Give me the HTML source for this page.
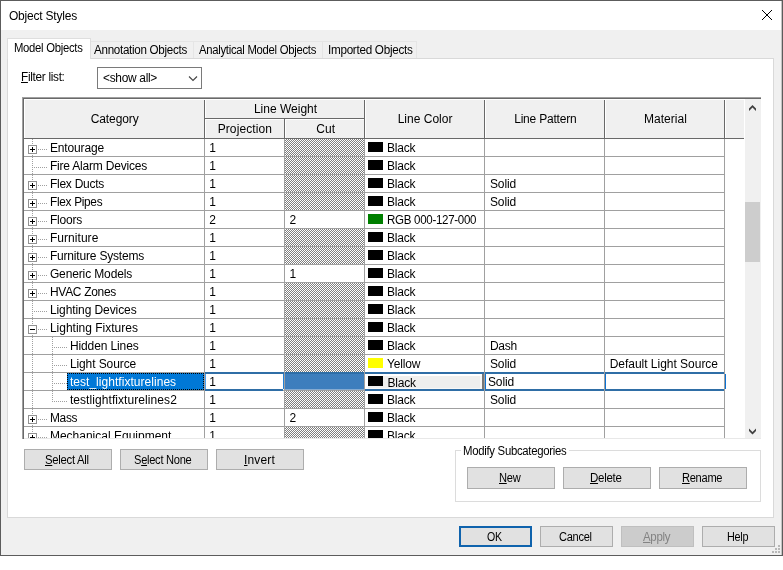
<!DOCTYPE html>
<html><head><meta charset="utf-8"><title>Object Styles</title>
<style>
html,body{margin:0;padding:0;background:#fff}
body{width:783px;height:570px;position:relative;overflow:hidden;font-family:"Liberation Sans",sans-serif;font-size:12px}
.t{position:absolute;white-space:pre;line-height:14px;height:14px;filter:grayscale(1)}
u{text-decoration:underline;text-underline-offset:1px}
</style></head><body>
<div style="position:absolute;left:0px;top:0px;width:783px;height:556px;background:#5c5c5c"></div>
<div style="position:absolute;left:1px;top:1px;width:781px;height:554px;background:#f0f0f0"></div>
<div style="position:absolute;left:1px;top:1px;width:781px;height:29px;background:#fff"></div>
<div class="t" style="left:8.90px;top:9px;font-size:12px;letter-spacing:-0.200px;color:#000;">Object Styles</div>
<svg style="position:absolute;left:761px;top:9px" width="12" height="12" viewBox="0 0 12 12"><path d="M1 1 L11 11 M11 1 L1 11" stroke="#000" stroke-width="1" fill="none"/></svg>
<div style="position:absolute;left:781px;top:1px;width:1px;height:554px;background:#c4c4c4"></div>
<div style="position:absolute;left:91px;top:41px;width:103px;height:18px;background:#f0f0f0;border:1px solid #e5e5e5;border-left:none;box-sizing:border-box"></div>
<div style="position:absolute;left:194px;top:41px;width:129px;height:18px;background:#f0f0f0;border:1px solid #e5e5e5;border-left:none;box-sizing:border-box"></div>
<div style="position:absolute;left:323px;top:41px;width:94px;height:18px;background:#f0f0f0;border:1px solid #e5e5e5;border-left:none;box-sizing:border-box"></div>
<div style="position:absolute;left:7px;top:58px;width:767px;height:460px;background:#fff;border:1px solid #d9d9d9;box-sizing:border-box"></div>
<div style="position:absolute;left:7px;top:38px;width:84px;height:21px;background:#fff;border:1px solid #dedede;border-bottom:none;box-sizing:border-box"></div>
<div class="t" style="left:13.90px;top:41px;font-size:12px;letter-spacing:-0.300px;color:#000;transform:scaleX(0.9409);transform-origin:0 50%;">Model Objects</div>
<div class="t" style="left:94.40px;top:43px;font-size:12px;letter-spacing:-0.300px;color:#000;transform:scaleX(0.9687);transform-origin:0 50%;">Annotation Objects</div>
<div class="t" style="left:199.40px;top:43px;font-size:12px;letter-spacing:-0.300px;color:#000;transform:scaleX(0.9421);transform-origin:0 50%;">Analytical Model Objects</div>
<div class="t" style="left:327.90px;top:43px;font-size:12px;letter-spacing:-0.300px;color:#000;transform:scaleX(0.9760);transform-origin:0 50%;">Imported Objects</div>
<div class="t" style="left:21.40px;top:70px;font-size:12px;letter-spacing:-0.300px;color:#000;transform:scaleX(0.9820);transform-origin:0 50%;"><u>F</u>ilter list:</div>
<div style="position:absolute;left:97px;top:67px;width:105px;height:22px;background:#fff;border:1px solid #7a7a7a;box-sizing:border-box"></div>
<div class="t" style="left:102.65px;top:71px;font-size:12px;letter-spacing:-0.300px;color:#000;transform:scaleX(0.9931);transform-origin:0 50%;">&lt;show all&gt;</div>
<svg style="position:absolute;left:187px;top:74px" width="12" height="8" viewBox="0 0 12 8"><path d="M2 2.5 L6 6.5 L10 2.5" stroke="#444" stroke-width="1.1" fill="none"/></svg>
<div style="position:absolute;left:22px;top:97px;width:739px;height:342px;background:#fff"></div>
<div style="position:absolute;left:24px;top:99px;width:720px;height:39px;background:#f0f0f0"></div>
<div style="position:absolute;left:24px;top:139px;width:737px;height:299px;overflow:hidden"><div style="position:absolute;left:-24px;top:-139px">
<div style="position:absolute;left:32px;top:139px;width:1px;height:300px;background:repeating-linear-gradient(180deg,#a0a0a0 0 1px,transparent 1px 2px)"></div>
<div style="position:absolute;left:52px;top:337px;width:1px;height:64px;background:repeating-linear-gradient(180deg,#a0a0a0 0 1px,transparent 1px 2px)"></div>
<div style="position:absolute;left:24px;top:156px;width:700px;height:1px;background:#a0a0a0"></div>
<div style="position:absolute;left:285px;top:139px;width:79px;height:17px;background:conic-gradient(#7f7f7f 25%,#fff 0 50%,#7f7f7f 0 75%,#fff 0) 0 0/2px 2px"></div>
<div style="position:absolute;left:28px;top:145px;width:9px;height:9px;box-sizing:border-box;border:1px solid #919191;background:#fff"></div>
<div style="position:absolute;left:30px;top:149px;width:5px;height:1px;background:#000"></div>
<div style="position:absolute;left:32px;top:147px;width:1px;height:5px;background:#000"></div>
<div style="position:absolute;left:38px;top:149px;width:10px;height:1px;background:repeating-linear-gradient(90deg,#a0a0a0 0 1px,transparent 1px 2px)"></div>
<div class="t" style="left:49.90px;top:141px;font-size:12px;letter-spacing:-0.127px;color:#000;">Entourage</div>
<div class="t" style="left:209.30px;top:141px;font-size:12px;letter-spacing:0.000px;color:#000;">1</div>
<div style="position:absolute;left:368px;top:142px;width:15px;height:10px;background:#000"></div>
<div class="t" style="left:386.90px;top:141px;font-size:12px;letter-spacing:-0.169px;color:#000;">Black</div>
<div style="position:absolute;left:24px;top:174px;width:700px;height:1px;background:#a0a0a0"></div>
<div style="position:absolute;left:285px;top:157px;width:79px;height:17px;background:conic-gradient(#7f7f7f 25%,#fff 0 50%,#7f7f7f 0 75%,#fff 0) 0 0/2px 2px"></div>
<div style="position:absolute;left:32px;top:167px;width:16px;height:1px;background:repeating-linear-gradient(90deg,#a0a0a0 0 1px,transparent 1px 2px)"></div>
<div class="t" style="left:49.90px;top:159px;font-size:12px;letter-spacing:-0.191px;color:#000;">Fire Alarm Devices</div>
<div class="t" style="left:209.30px;top:159px;font-size:12px;letter-spacing:0.000px;color:#000;">1</div>
<div style="position:absolute;left:368px;top:160px;width:15px;height:10px;background:#000"></div>
<div class="t" style="left:386.90px;top:159px;font-size:12px;letter-spacing:-0.169px;color:#000;">Black</div>
<div style="position:absolute;left:24px;top:192px;width:700px;height:1px;background:#a0a0a0"></div>
<div style="position:absolute;left:285px;top:175px;width:79px;height:17px;background:conic-gradient(#7f7f7f 25%,#fff 0 50%,#7f7f7f 0 75%,#fff 0) 0 0/2px 2px"></div>
<div style="position:absolute;left:28px;top:181px;width:9px;height:9px;box-sizing:border-box;border:1px solid #919191;background:#fff"></div>
<div style="position:absolute;left:30px;top:185px;width:5px;height:1px;background:#000"></div>
<div style="position:absolute;left:32px;top:183px;width:1px;height:5px;background:#000"></div>
<div style="position:absolute;left:38px;top:185px;width:10px;height:1px;background:repeating-linear-gradient(90deg,#a0a0a0 0 1px,transparent 1px 2px)"></div>
<div class="t" style="left:49.90px;top:177px;font-size:12px;letter-spacing:-0.244px;color:#000;">Flex Ducts</div>
<div class="t" style="left:209.30px;top:177px;font-size:12px;letter-spacing:0.000px;color:#000;">1</div>
<div style="position:absolute;left:368px;top:178px;width:15px;height:10px;background:#000"></div>
<div class="t" style="left:386.90px;top:177px;font-size:12px;letter-spacing:-0.169px;color:#000;">Black</div>
<div class="t" style="left:489.90px;top:177px;font-size:12px;letter-spacing:-0.087px;color:#000;">Solid</div>
<div style="position:absolute;left:24px;top:210px;width:700px;height:1px;background:#a0a0a0"></div>
<div style="position:absolute;left:285px;top:193px;width:79px;height:17px;background:conic-gradient(#7f7f7f 25%,#fff 0 50%,#7f7f7f 0 75%,#fff 0) 0 0/2px 2px"></div>
<div style="position:absolute;left:28px;top:199px;width:9px;height:9px;box-sizing:border-box;border:1px solid #919191;background:#fff"></div>
<div style="position:absolute;left:30px;top:203px;width:5px;height:1px;background:#000"></div>
<div style="position:absolute;left:32px;top:201px;width:1px;height:5px;background:#000"></div>
<div style="position:absolute;left:38px;top:203px;width:10px;height:1px;background:repeating-linear-gradient(90deg,#a0a0a0 0 1px,transparent 1px 2px)"></div>
<div class="t" style="left:49.90px;top:195px;font-size:12px;letter-spacing:-0.300px;color:#000;transform:scaleX(0.9853);transform-origin:0 50%;">Flex Pipes</div>
<div class="t" style="left:209.30px;top:195px;font-size:12px;letter-spacing:0.000px;color:#000;">1</div>
<div style="position:absolute;left:368px;top:196px;width:15px;height:10px;background:#000"></div>
<div class="t" style="left:386.90px;top:195px;font-size:12px;letter-spacing:-0.169px;color:#000;">Black</div>
<div class="t" style="left:489.90px;top:195px;font-size:12px;letter-spacing:-0.087px;color:#000;">Solid</div>
<div style="position:absolute;left:24px;top:228px;width:700px;height:1px;background:#a0a0a0"></div>
<div style="position:absolute;left:28px;top:217px;width:9px;height:9px;box-sizing:border-box;border:1px solid #919191;background:#fff"></div>
<div style="position:absolute;left:30px;top:221px;width:5px;height:1px;background:#000"></div>
<div style="position:absolute;left:32px;top:219px;width:1px;height:5px;background:#000"></div>
<div style="position:absolute;left:38px;top:221px;width:10px;height:1px;background:repeating-linear-gradient(90deg,#a0a0a0 0 1px,transparent 1px 2px)"></div>
<div class="t" style="left:49.90px;top:213px;font-size:12px;letter-spacing:-0.182px;color:#000;">Floors</div>
<div class="t" style="left:209.30px;top:213px;font-size:12px;letter-spacing:0.000px;color:#000;">2</div>
<div class="t" style="left:289.50px;top:213px;font-size:12px;letter-spacing:0.000px;color:#000;">2</div>
<div style="position:absolute;left:368px;top:214px;width:15px;height:10px;background:#007f00"></div>
<div class="t" style="left:386.90px;top:213px;font-size:12px;letter-spacing:-0.300px;color:#000;transform:scaleX(0.9606);transform-origin:0 50%;">RGB 000-127-000</div>
<div style="position:absolute;left:24px;top:246px;width:700px;height:1px;background:#a0a0a0"></div>
<div style="position:absolute;left:285px;top:229px;width:79px;height:17px;background:conic-gradient(#7f7f7f 25%,#fff 0 50%,#7f7f7f 0 75%,#fff 0) 0 0/2px 2px"></div>
<div style="position:absolute;left:28px;top:235px;width:9px;height:9px;box-sizing:border-box;border:1px solid #919191;background:#fff"></div>
<div style="position:absolute;left:30px;top:239px;width:5px;height:1px;background:#000"></div>
<div style="position:absolute;left:32px;top:237px;width:1px;height:5px;background:#000"></div>
<div style="position:absolute;left:38px;top:239px;width:10px;height:1px;background:repeating-linear-gradient(90deg,#a0a0a0 0 1px,transparent 1px 2px)"></div>
<div class="t" style="left:49.90px;top:231px;font-size:12px;letter-spacing:0.052px;color:#000;">Furniture</div>
<div class="t" style="left:209.30px;top:231px;font-size:12px;letter-spacing:0.000px;color:#000;">1</div>
<div style="position:absolute;left:368px;top:232px;width:15px;height:10px;background:#000"></div>
<div class="t" style="left:386.90px;top:231px;font-size:12px;letter-spacing:-0.169px;color:#000;">Black</div>
<div style="position:absolute;left:24px;top:264px;width:700px;height:1px;background:#a0a0a0"></div>
<div style="position:absolute;left:285px;top:247px;width:79px;height:17px;background:conic-gradient(#7f7f7f 25%,#fff 0 50%,#7f7f7f 0 75%,#fff 0) 0 0/2px 2px"></div>
<div style="position:absolute;left:28px;top:253px;width:9px;height:9px;box-sizing:border-box;border:1px solid #919191;background:#fff"></div>
<div style="position:absolute;left:30px;top:257px;width:5px;height:1px;background:#000"></div>
<div style="position:absolute;left:32px;top:255px;width:1px;height:5px;background:#000"></div>
<div style="position:absolute;left:38px;top:257px;width:10px;height:1px;background:repeating-linear-gradient(90deg,#a0a0a0 0 1px,transparent 1px 2px)"></div>
<div class="t" style="left:49.90px;top:249px;font-size:12px;letter-spacing:-0.183px;color:#000;">Furniture Systems</div>
<div class="t" style="left:209.30px;top:249px;font-size:12px;letter-spacing:0.000px;color:#000;">1</div>
<div style="position:absolute;left:368px;top:250px;width:15px;height:10px;background:#000"></div>
<div class="t" style="left:386.90px;top:249px;font-size:12px;letter-spacing:-0.169px;color:#000;">Black</div>
<div style="position:absolute;left:24px;top:282px;width:700px;height:1px;background:#a0a0a0"></div>
<div style="position:absolute;left:28px;top:271px;width:9px;height:9px;box-sizing:border-box;border:1px solid #919191;background:#fff"></div>
<div style="position:absolute;left:30px;top:275px;width:5px;height:1px;background:#000"></div>
<div style="position:absolute;left:32px;top:273px;width:1px;height:5px;background:#000"></div>
<div style="position:absolute;left:38px;top:275px;width:10px;height:1px;background:repeating-linear-gradient(90deg,#a0a0a0 0 1px,transparent 1px 2px)"></div>
<div class="t" style="left:49.90px;top:267px;font-size:12px;letter-spacing:-0.128px;color:#000;">Generic Models</div>
<div class="t" style="left:209.30px;top:267px;font-size:12px;letter-spacing:0.000px;color:#000;">1</div>
<div class="t" style="left:289.50px;top:267px;font-size:12px;letter-spacing:0.000px;color:#000;">1</div>
<div style="position:absolute;left:368px;top:268px;width:15px;height:10px;background:#000"></div>
<div class="t" style="left:386.90px;top:267px;font-size:12px;letter-spacing:-0.169px;color:#000;">Black</div>
<div style="position:absolute;left:24px;top:300px;width:700px;height:1px;background:#a0a0a0"></div>
<div style="position:absolute;left:285px;top:283px;width:79px;height:17px;background:conic-gradient(#7f7f7f 25%,#fff 0 50%,#7f7f7f 0 75%,#fff 0) 0 0/2px 2px"></div>
<div style="position:absolute;left:28px;top:289px;width:9px;height:9px;box-sizing:border-box;border:1px solid #919191;background:#fff"></div>
<div style="position:absolute;left:30px;top:293px;width:5px;height:1px;background:#000"></div>
<div style="position:absolute;left:32px;top:291px;width:1px;height:5px;background:#000"></div>
<div style="position:absolute;left:38px;top:293px;width:10px;height:1px;background:repeating-linear-gradient(90deg,#a0a0a0 0 1px,transparent 1px 2px)"></div>
<div class="t" style="left:49.90px;top:285px;font-size:12px;letter-spacing:-0.300px;color:#000;transform:scaleX(0.9979);transform-origin:0 50%;">HVAC Zones</div>
<div class="t" style="left:209.30px;top:285px;font-size:12px;letter-spacing:0.000px;color:#000;">1</div>
<div style="position:absolute;left:368px;top:286px;width:15px;height:10px;background:#000"></div>
<div class="t" style="left:386.90px;top:285px;font-size:12px;letter-spacing:-0.169px;color:#000;">Black</div>
<div style="position:absolute;left:24px;top:318px;width:700px;height:1px;background:#a0a0a0"></div>
<div style="position:absolute;left:285px;top:301px;width:79px;height:17px;background:conic-gradient(#7f7f7f 25%,#fff 0 50%,#7f7f7f 0 75%,#fff 0) 0 0/2px 2px"></div>
<div style="position:absolute;left:32px;top:311px;width:16px;height:1px;background:repeating-linear-gradient(90deg,#a0a0a0 0 1px,transparent 1px 2px)"></div>
<div class="t" style="left:49.90px;top:303px;font-size:12px;letter-spacing:-0.082px;color:#000;">Lighting Devices</div>
<div class="t" style="left:209.30px;top:303px;font-size:12px;letter-spacing:0.000px;color:#000;">1</div>
<div style="position:absolute;left:368px;top:304px;width:15px;height:10px;background:#000"></div>
<div class="t" style="left:386.90px;top:303px;font-size:12px;letter-spacing:-0.169px;color:#000;">Black</div>
<div style="position:absolute;left:24px;top:336px;width:700px;height:1px;background:#a0a0a0"></div>
<div style="position:absolute;left:285px;top:319px;width:79px;height:17px;background:conic-gradient(#7f7f7f 25%,#fff 0 50%,#7f7f7f 0 75%,#fff 0) 0 0/2px 2px"></div>
<div style="position:absolute;left:28px;top:325px;width:9px;height:9px;box-sizing:border-box;border:1px solid #919191;background:#fff"></div>
<div style="position:absolute;left:30px;top:329px;width:5px;height:1px;background:#000"></div>
<div style="position:absolute;left:38px;top:329px;width:10px;height:1px;background:repeating-linear-gradient(90deg,#a0a0a0 0 1px,transparent 1px 2px)"></div>
<div class="t" style="left:49.90px;top:321px;font-size:12px;letter-spacing:-0.003px;color:#000;">Lighting Fixtures</div>
<div class="t" style="left:209.30px;top:321px;font-size:12px;letter-spacing:0.000px;color:#000;">1</div>
<div style="position:absolute;left:368px;top:322px;width:15px;height:10px;background:#000"></div>
<div class="t" style="left:386.90px;top:321px;font-size:12px;letter-spacing:-0.169px;color:#000;">Black</div>
<div style="position:absolute;left:24px;top:354px;width:700px;height:1px;background:#a0a0a0"></div>
<div style="position:absolute;left:285px;top:337px;width:79px;height:17px;background:conic-gradient(#7f7f7f 25%,#fff 0 50%,#7f7f7f 0 75%,#fff 0) 0 0/2px 2px"></div>
<div style="position:absolute;left:52px;top:347px;width:15px;height:1px;background:repeating-linear-gradient(90deg,#a0a0a0 0 1px,transparent 1px 2px)"></div>
<div class="t" style="left:69.90px;top:339px;font-size:12px;letter-spacing:-0.109px;color:#000;">Hidden Lines</div>
<div class="t" style="left:209.30px;top:339px;font-size:12px;letter-spacing:0.000px;color:#000;">1</div>
<div style="position:absolute;left:368px;top:340px;width:15px;height:10px;background:#000"></div>
<div class="t" style="left:386.90px;top:339px;font-size:12px;letter-spacing:-0.169px;color:#000;">Black</div>
<div class="t" style="left:489.90px;top:339px;font-size:12px;letter-spacing:-0.254px;color:#000;">Dash</div>
<div style="position:absolute;left:24px;top:372px;width:700px;height:1px;background:#a0a0a0"></div>
<div style="position:absolute;left:285px;top:355px;width:79px;height:17px;background:conic-gradient(#7f7f7f 25%,#fff 0 50%,#7f7f7f 0 75%,#fff 0) 0 0/2px 2px"></div>
<div style="position:absolute;left:52px;top:365px;width:15px;height:1px;background:repeating-linear-gradient(90deg,#a0a0a0 0 1px,transparent 1px 2px)"></div>
<div class="t" style="left:69.90px;top:357px;font-size:12px;letter-spacing:-0.095px;color:#000;">Light Source</div>
<div class="t" style="left:209.30px;top:357px;font-size:12px;letter-spacing:0.000px;color:#000;">1</div>
<div style="position:absolute;left:368px;top:358px;width:15px;height:10px;background:#ffff00"></div>
<div class="t" style="left:386.90px;top:357px;font-size:12px;letter-spacing:-0.125px;color:#000;">Yellow</div>
<div class="t" style="left:489.90px;top:357px;font-size:12px;letter-spacing:-0.087px;color:#000;">Solid</div>
<div class="t" style="left:609.70px;top:357px;font-size:12px;letter-spacing:-0.022px;color:#000;">Default Light Source</div>
<div style="position:absolute;left:24px;top:390px;width:700px;height:1px;background:#a0a0a0"></div>
<div style="position:absolute;left:52px;top:383px;width:15px;height:1px;background:repeating-linear-gradient(90deg,#a0a0a0 0 1px,transparent 1px 2px)"></div>
<div style="position:absolute;left:67px;top:373px;width:137px;height:17px;background:#0078d7;outline:1px dotted #000;outline-offset:-1px"></div>
<div class="t" style="left:69.90px;top:375px;font-size:12px;letter-spacing:0.039px;color:#fff;">test_lightfixturelines</div>
<div style="position:absolute;left:283px;top:372px;width:82px;height:17px;background:#3d7ebd"></div>
<div style="position:absolute;left:283px;top:372px;width:2px;height:17px;background:#2080d8"></div>
<div style="position:absolute;left:285px;top:389px;width:80px;height:1px;background:#86abd0"></div>
<div style="position:absolute;left:366px;top:374px;width:116px;height:15px;background:#efefee;box-shadow:inset 2px 2px 0 #fff, inset -2px -1px 0 #f8f8f8"></div>
<div style="position:absolute;left:482px;top:374px;width:2px;height:15px;background:#787878"></div>
<div style="position:absolute;left:204px;top:372px;width:521px;height:2px;background:#2f6ea6"></div>
<div style="position:absolute;left:204px;top:389px;width:79px;height:2px;background:#2f6ea6"></div>
<div style="position:absolute;left:365px;top:389px;width:360px;height:2px;background:#2f6ea6"></div>
<div style="position:absolute;left:205px;top:374px;width:1px;height:15px;background:#4da0f0"></div>
<div style="position:absolute;left:484px;top:374px;width:2px;height:15px;background:#0b72d4"></div>
<div style="position:absolute;left:604px;top:374px;width:2px;height:15px;background:#0b72d4"></div>
<div style="position:absolute;left:724px;top:374px;width:2px;height:15px;background:#0b72d4"></div>
<div class="t" style="left:209.30px;top:375px;font-size:12px;letter-spacing:0.000px;color:#000;">1</div>
<div style="position:absolute;left:368px;top:376px;width:15px;height:10px;background:#000"></div>
<div class="t" style="left:387.40px;top:376px;font-size:12px;letter-spacing:-0.169px;color:#000;">Black</div>
<div class="t" style="left:487.90px;top:375px;font-size:12px;letter-spacing:-0.087px;color:#000;">Solid</div>
<div style="position:absolute;left:24px;top:408px;width:700px;height:1px;background:#a0a0a0"></div>
<div style="position:absolute;left:285px;top:391px;width:79px;height:17px;background:conic-gradient(#7f7f7f 25%,#fff 0 50%,#7f7f7f 0 75%,#fff 0) 0 0/2px 2px"></div>
<div style="position:absolute;left:52px;top:401px;width:15px;height:1px;background:repeating-linear-gradient(90deg,#a0a0a0 0 1px,transparent 1px 2px)"></div>
<div class="t" style="left:69.90px;top:393px;font-size:12px;letter-spacing:0.073px;color:#000;">testlightfixturelines2</div>
<div class="t" style="left:209.30px;top:393px;font-size:12px;letter-spacing:0.000px;color:#000;">1</div>
<div style="position:absolute;left:368px;top:394px;width:15px;height:10px;background:#000"></div>
<div class="t" style="left:386.90px;top:393px;font-size:12px;letter-spacing:-0.169px;color:#000;">Black</div>
<div class="t" style="left:489.90px;top:393px;font-size:12px;letter-spacing:-0.087px;color:#000;">Solid</div>
<div style="position:absolute;left:24px;top:426px;width:700px;height:1px;background:#a0a0a0"></div>
<div style="position:absolute;left:28px;top:415px;width:9px;height:9px;box-sizing:border-box;border:1px solid #919191;background:#fff"></div>
<div style="position:absolute;left:30px;top:419px;width:5px;height:1px;background:#000"></div>
<div style="position:absolute;left:32px;top:417px;width:1px;height:5px;background:#000"></div>
<div style="position:absolute;left:38px;top:419px;width:10px;height:1px;background:repeating-linear-gradient(90deg,#a0a0a0 0 1px,transparent 1px 2px)"></div>
<div class="t" style="left:49.90px;top:411px;font-size:12px;letter-spacing:-0.300px;color:#000;transform:scaleX(0.9919);transform-origin:0 50%;">Mass</div>
<div class="t" style="left:209.30px;top:411px;font-size:12px;letter-spacing:0.000px;color:#000;">1</div>
<div class="t" style="left:289.50px;top:411px;font-size:12px;letter-spacing:0.000px;color:#000;">2</div>
<div style="position:absolute;left:368px;top:412px;width:15px;height:10px;background:#000"></div>
<div class="t" style="left:386.90px;top:411px;font-size:12px;letter-spacing:-0.169px;color:#000;">Black</div>
<div style="position:absolute;left:24px;top:444px;width:700px;height:1px;background:#a0a0a0"></div>
<div style="position:absolute;left:285px;top:427px;width:79px;height:17px;background:conic-gradient(#7f7f7f 25%,#fff 0 50%,#7f7f7f 0 75%,#fff 0) 0 0/2px 2px"></div>
<div style="position:absolute;left:28px;top:433px;width:9px;height:9px;box-sizing:border-box;border:1px solid #919191;background:#fff"></div>
<div style="position:absolute;left:30px;top:437px;width:5px;height:1px;background:#000"></div>
<div style="position:absolute;left:32px;top:435px;width:1px;height:5px;background:#000"></div>
<div style="position:absolute;left:38px;top:437px;width:10px;height:1px;background:repeating-linear-gradient(90deg,#a0a0a0 0 1px,transparent 1px 2px)"></div>
<div class="t" style="left:49.90px;top:429px;font-size:12px;letter-spacing:0.005px;color:#000;">Mechanical Equipment</div>
<div class="t" style="left:209.30px;top:429px;font-size:12px;letter-spacing:0.000px;color:#000;">1</div>
<div style="position:absolute;left:368px;top:430px;width:15px;height:10px;background:#000"></div>
<div class="t" style="left:386.90px;top:429px;font-size:12px;letter-spacing:-0.169px;color:#000;">Black</div>
</div></div>
<div style="position:absolute;left:204px;top:139px;width:1px;height:299px;background:#a0a0a0"></div>
<div style="position:absolute;left:204px;top:99px;width:1px;height:40px;background:#696969"></div>
<div style="position:absolute;left:205px;top:99px;width:1px;height:39px;background:#fff"></div>
<div style="position:absolute;left:284px;top:139px;width:1px;height:299px;background:#a0a0a0"></div>
<div style="position:absolute;left:364px;top:139px;width:1px;height:299px;background:#a0a0a0"></div>
<div style="position:absolute;left:364px;top:99px;width:1px;height:40px;background:#696969"></div>
<div style="position:absolute;left:365px;top:99px;width:1px;height:39px;background:#fff"></div>
<div style="position:absolute;left:484px;top:139px;width:1px;height:299px;background:#a0a0a0"></div>
<div style="position:absolute;left:484px;top:99px;width:1px;height:40px;background:#696969"></div>
<div style="position:absolute;left:485px;top:99px;width:1px;height:39px;background:#fff"></div>
<div style="position:absolute;left:604px;top:139px;width:1px;height:299px;background:#a0a0a0"></div>
<div style="position:absolute;left:604px;top:99px;width:1px;height:40px;background:#696969"></div>
<div style="position:absolute;left:605px;top:99px;width:1px;height:39px;background:#fff"></div>
<div style="position:absolute;left:724px;top:139px;width:1px;height:299px;background:#a0a0a0"></div>
<div style="position:absolute;left:724px;top:99px;width:1px;height:40px;background:#696969"></div>
<div style="position:absolute;left:725px;top:99px;width:1px;height:39px;background:#fff"></div>
<div style="position:absolute;left:24px;top:138px;width:720px;height:1px;background:#696969"></div>
<div style="position:absolute;left:24px;top:99px;width:720px;height:1px;background:#fff"></div>
<div style="position:absolute;left:24px;top:99px;width:1px;height:39px;background:#fff"></div>
<div style="position:absolute;left:204px;top:118px;width:160px;height:1px;background:#696969"></div>
<div style="position:absolute;left:205px;top:119px;width:159px;height:1px;background:#fff"></div>
<div style="position:absolute;left:284px;top:119px;width:1px;height:19px;background:#696969"></div>
<div style="position:absolute;left:285px;top:119px;width:1px;height:19px;background:#fff"></div>
<div class="t" style="left:90.65px;top:112px;font-size:12px;letter-spacing:-0.088px;color:#000;">Category</div>
<div class="t" style="left:253.90px;top:102px;font-size:12px;letter-spacing:0.009px;color:#000;">Line Weight</div>
<div class="t" style="left:217.65px;top:121.5px;font-size:12px;letter-spacing:0.113px;color:#000;">Projection</div>
<div class="t" style="left:316.15px;top:121.5px;font-size:12px;letter-spacing:0.188px;color:#000;">Cut</div>
<div class="t" style="left:397.70px;top:112px;font-size:12px;letter-spacing:-0.000px;color:#000;">Line Color</div>
<div class="t" style="left:514.20px;top:112px;font-size:12px;letter-spacing:-0.210px;color:#000;">Line Pattern</div>
<div class="t" style="left:643.90px;top:111.5px;font-size:12px;letter-spacing:0.039px;color:#000;">Material</div>
<div style="position:absolute;left:22px;top:97px;width:739px;height:1px;background:#a0a0a0"></div>
<div style="position:absolute;left:22px;top:97px;width:1px;height:342px;background:#a0a0a0"></div>
<div style="position:absolute;left:23px;top:98px;width:738px;height:1px;background:#696969"></div>
<div style="position:absolute;left:23px;top:98px;width:1px;height:341px;background:#696969"></div>
<div style="position:absolute;left:24px;top:438px;width:737px;height:1px;background:#e8e8e8"></div>
<div style="position:absolute;left:745px;top:99px;width:16px;height:339px;background:#f0f0f0"></div>
<div style="position:absolute;left:745px;top:202px;width:15px;height:60px;background:#cdcdcd"></div>
<svg style="position:absolute;left:744px;top:99px" width="17" height="340" viewBox="744 99 17 340"><polygon points="749,108.5 752.5,105 756,108.5 756,111 752.5,107.5 749,111" fill="#404040"/><polygon points="749,428.5 752.5,432 756,428.5 756,431 752.5,434.5 749,431" fill="#404040"/></svg>
<div style="position:absolute;left:24px;top:449px;width:88px;height:21px;background:#e1e1e1;border:1px solid #adadad;box-sizing:border-box"></div>
<div class="t" style="left:44.90px;top:452.5px;font-size:12px;letter-spacing:-0.300px;color:#000;transform:scaleX(0.9448);transform-origin:0 50%;"><u>S</u>elect All</div>
<div style="position:absolute;left:120px;top:449px;width:88px;height:21px;background:#e1e1e1;border:1px solid #adadad;box-sizing:border-box"></div>
<div class="t" style="left:133.90px;top:452.5px;font-size:12px;letter-spacing:-0.300px;color:#000;transform:scaleX(0.9247);transform-origin:0 50%;">S<u>e</u>lect None</div>
<div style="position:absolute;left:216px;top:449px;width:88px;height:21px;background:#e1e1e1;border:1px solid #adadad;box-sizing:border-box"></div>
<div class="t" style="left:244.00px;top:452.5px;font-size:12px;letter-spacing:0.164px;color:#000;"><u>I</u>nvert</div>
<div style="position:absolute;left:455px;top:450px;width:306px;height:52px;border:1px solid #dcdcdc;box-sizing:border-box"></div>
<div style="position:absolute;left:461px;top:445px;width:108px;height:12px;background:#fff"></div>
<div class="t" style="left:463.00px;top:444px;font-size:12px;letter-spacing:-0.300px;color:#000;transform:scaleX(0.9460);transform-origin:0 50%;">Modify Subcategories</div>
<div style="position:absolute;left:467px;top:467px;width:88px;height:22px;background:#e1e1e1;border:1px solid #adadad;box-sizing:border-box"></div>
<div class="t" style="left:499.20px;top:471px;font-size:12px;letter-spacing:-0.300px;color:#000;transform:scaleX(0.9258);transform-origin:0 50%;"><u>N</u>ew</div>
<div style="position:absolute;left:563px;top:467px;width:88px;height:22px;background:#e1e1e1;border:1px solid #adadad;box-sizing:border-box"></div>
<div class="t" style="left:589.80px;top:471px;font-size:12px;letter-spacing:-0.300px;color:#000;transform:scaleX(0.9609);transform-origin:0 50%;"><u>D</u>elete</div>
<div style="position:absolute;left:659px;top:467px;width:88px;height:22px;background:#e1e1e1;border:1px solid #adadad;box-sizing:border-box"></div>
<div class="t" style="left:681.60px;top:471px;font-size:12px;letter-spacing:-0.300px;color:#000;transform:scaleX(0.9229);transform-origin:0 50%;"><u>R</u>ename</div>
<div style="position:absolute;left:459px;top:526px;width:73px;height:21px;background:#e1e1e1;border:2px solid #0f63ad;box-sizing:border-box"></div>
<div class="t" style="left:486.90px;top:530px;font-size:12px;letter-spacing:-0.300px;color:#000;transform:scaleX(0.8809);transform-origin:0 50%;">OK</div>
<div style="position:absolute;left:540px;top:526px;width:73px;height:21px;background:#e1e1e1;border:1px solid #adadad;box-sizing:border-box"></div>
<div class="t" style="left:558.90px;top:530px;font-size:12px;letter-spacing:-0.300px;color:#000;transform:scaleX(0.9210);transform-origin:0 50%;">Cancel</div>
<div style="position:absolute;left:621px;top:526px;width:73px;height:21px;background:#cccccc;border:1px solid #bfbfbf;box-sizing:border-box"></div>
<div class="t" style="left:643.40px;top:530px;font-size:12px;letter-spacing:-0.300px;color:#838383;transform:scaleX(0.9551);transform-origin:0 50%;"><u>A</u>pply</div>
<div style="position:absolute;left:702px;top:526px;width:73px;height:21px;background:#e1e1e1;border:1px solid #adadad;box-sizing:border-box"></div>
<div class="t" style="left:726.90px;top:530px;font-size:12px;letter-spacing:-0.300px;color:#000;transform:scaleX(0.9047);transform-origin:0 50%;">Help</div>
<div style="position:absolute;left:778px;top:551px;width:2px;height:2px;background:#b8b8b8"></div>
<div style="position:absolute;left:778px;top:548px;width:2px;height:2px;background:#b8b8b8"></div>
<div style="position:absolute;left:778px;top:545px;width:2px;height:2px;background:#b8b8b8"></div>
<div style="position:absolute;left:775px;top:551px;width:2px;height:2px;background:#b8b8b8"></div>
<div style="position:absolute;left:775px;top:548px;width:2px;height:2px;background:#b8b8b8"></div>
<div style="position:absolute;left:772px;top:551px;width:2px;height:2px;background:#b8b8b8"></div>
</body></html>
